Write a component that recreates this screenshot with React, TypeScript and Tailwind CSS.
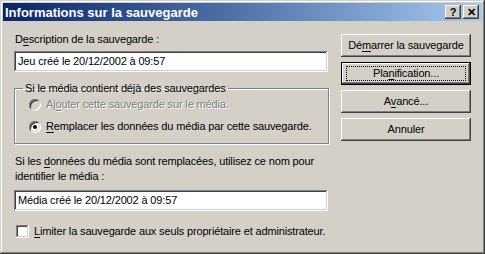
import type { ReactNode } from 'react';

const raised =
  'shadow-[inset_-1px_-1px_#404040,inset_1px_1px_#ffffff,inset_-2px_-2px_#808080,inset_2px_2px_#d4d0c8]';
const sunken =
  'shadow-[inset_-1px_-1px_#ffffff,inset_1px_1px_#808080,inset_-2px_-2px_#d4d0c8,inset_2px_2px_#404040]';

function U({ children }: { children: ReactNode }) {
  return <span className="underline underline-offset-[2px]">{children}</span>;
}

function Button({ children, isDefault }: { children: ReactNode; isDefault?: boolean }) {
  if (isDefault) {
    return (
      <div className="h-[23px] w-[130px] border border-black">
        <div className={`flex h-full items-center justify-center ${raised}`}>
          <div className="flex h-[13px] w-[118px] items-center justify-center outline-1 outline-dotted outline-black">
            {children}
          </div>
        </div>
      </div>
    );
  }
  return <div className={`flex h-[23px] w-[130px] items-center justify-center ${raised}`}>{children}</div>;
}

function TitleButton({ children }: { children: ReactNode }) {
  return (
    <div className={`flex h-[14px] w-[16px] items-center justify-center bg-[#d4d0c8] text-[11px] font-bold leading-none text-black ${raised}`}>
      {children}
    </div>
  );
}

function Radio({ checked, disabled }: { checked?: boolean; disabled?: boolean }) {
  return (
    <div
      className={`flex h-[12px] w-[12px] shrink-0 items-center justify-center rounded-full ${
        disabled ? 'bg-[#d4d0c8]' : 'bg-white'
      } ${sunken}`}
    >
      {checked && <div className="h-[4px] w-[4px] rounded-full bg-black" />}
    </div>
  );
}

export default function App() {
  return (
    <div className="h-[254px] w-[485px] whitespace-nowrap bg-[#d4d0c8] font-['Liberation_Sans',Arial,sans-serif] text-[11px] leading-[13px] tracking-[-0.15px] text-black">
      <div className="flex h-full flex-col p-[3px] shadow-[inset_-1px_-1px_#404040,inset_1px_1px_#d4d0c8,inset_-2px_-2px_#808080,inset_2px_2px_#ffffff]">
        <div className="flex h-[18px] items-center bg-gradient-to-r from-[#0a246a] to-[#a6caf0] pl-[2px] pr-[3px]">
          <span className="text-[13px] font-bold tracking-normal text-white">Informations sur la sauvegarde</span>
          <div className="ml-auto flex gap-[2px]">
            <TitleButton>?</TitleButton>
            <TitleButton>✕</TitleButton>
          </div>
        </div>

        <div className="flex pl-[11px] pt-[12px]">
          <div className="flex w-[315px] flex-col">
            <div className="pl-[1px]">
              D<U>e</U>scription de la sauvegarde :
            </div>
            <div className={`mt-[5px] flex h-[21px] w-[314px] items-center bg-white px-[4px] ${sunken}`}>
              Jeu créé le 20/12/2002 à 09:57
            </div>

            <fieldset className="mt-[10px] h-[62px] border border-[#808080] px-[14px] pt-[3px] shadow-[1px_1px_0_#ffffff,inset_1px_1px_0_#ffffff]">
              <legend className="ml-[-6px] px-[2px]">Si le média contient déjà des sauvegardes</legend>
              <div className="flex flex-col gap-[9px]">
                <div className="flex items-center gap-[5px]">
                  <Radio disabled />
                  <span className="text-[#808080] [text-shadow:1px_1px_0_#ffffff]">
                    Aj<U>o</U>uter cette sauvegarde sur le média.
                  </span>
                </div>
                <div className="flex items-center gap-[5px]">
                  <Radio checked />
                  <span>
                    <U>R</U>emplacer les données du média par cette sauvegarde.
                  </span>
                </div>
              </div>
            </fieldset>

            <div className="mt-[10px] pl-[1px] leading-[15px]">
              Si les <U>d</U>onnées du média sont remplacées, utilisez ce nom pour
              <br />
              identifier le média :
            </div>
            <div className={`mt-[6px] flex h-[21px] w-[314px] items-center bg-white px-[4px] ${sunken}`}>
              Média créé le 20/12/2002 à 09:57
            </div>

            <div className="mt-[14px] flex items-center gap-[5px] pl-[2px]">
              <div className={`h-[13px] w-[13px] shrink-0 bg-white ${sunken}`} />
              <span>
                <U>L</U>imiter la sauvegarde aux seuls propriétaire et administrateur.
              </span>
            </div>
          </div>

          <div className="ml-[12px] flex flex-col gap-[5px] pt-[1px]">
            <Button>
              <span>
                Dé<U>m</U>arrer la sauvegarde
              </span>
            </Button>
            <Button isDefault>
              <span>
                Pla<U>n</U>ification...
              </span>
            </Button>
            <Button>
              <span>
                A<U>v</U>ancé...
              </span>
            </Button>
            <Button>Annuler</Button>
          </div>
        </div>
      </div>
    </div>
  );
}
